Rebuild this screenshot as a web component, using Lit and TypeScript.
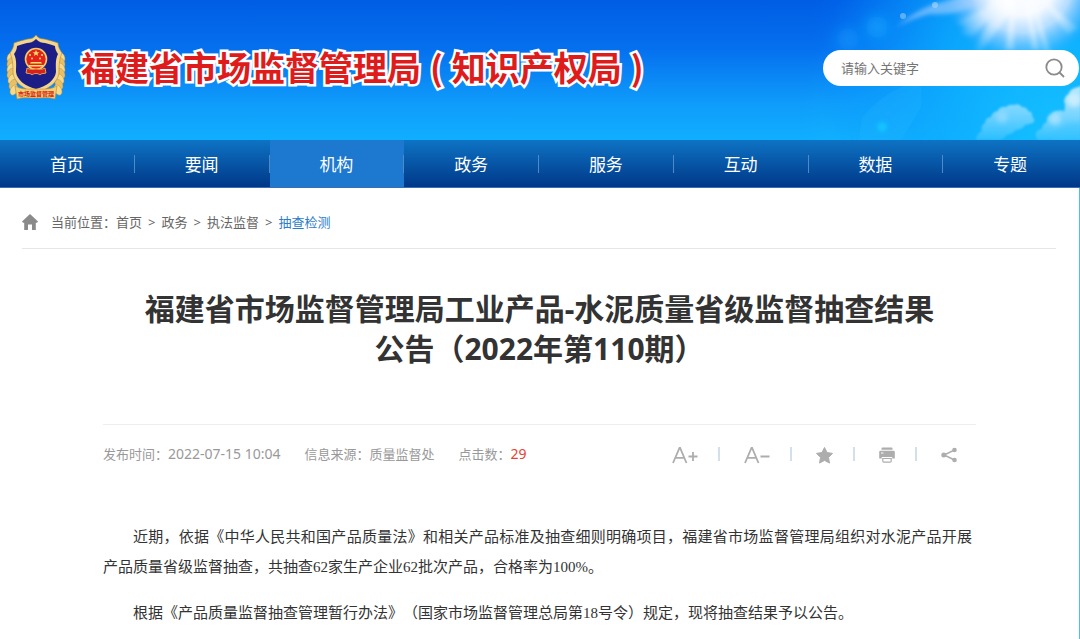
import { LitElement, html, css, svg } from "lit";
import { customElement } from "lit/decorators.js";

const NAV = ["首页", "要闻", "机构", "政务", "服务", "互动", "数据", "专题"];
const CRUMBS = ["首页", "政务", "执法监督", "抽查检测"];

const TOOLS = [
  { label: "放大字号", width: 26, art: svg`<path fill="none" stroke="currentColor" stroke-width="1.8" d="M1 19L7.500 4h.6L14.500 19M3.200 13.800h9.200M16.500 12.500h9M21 8v9"/>` },
  { label: "缩小字号", width: 26, art: svg`<path fill="none" stroke="currentColor" stroke-width="1.8" d="M1 19L7.500 4h.6L14.500 19M3.200 13.800h9.200M16.500 12.500h9"/>` },
  { label: "收藏", width: 17, art: svg`<path stroke="currentColor" stroke-linejoin="round" d="M8.500 3.500l2.500 5 5.500.9-4 4 1 5.700-5-2.700-5 2.700 1-5.700-4-4 5.500-.9z"/>` },
  { label: "打印", width: 16, art: svg`<path d="M3.500 3.500h9q1 0 1 1v1.200h-11V4.500q0-1 1-1zM1.500 6.700h13q1.300 0 1.300 1.300v6.500h-2.600V13H2.800v1.500H.2V8q0-1.300 1.300-1.300z"/><path fill="#fff" d="M2 8.500h2.500v1H2z"/><path fill="none" stroke="currentColor" stroke-width="1.200" d="M3.800 14.500h8.400V17q0 1.200-1 1.200H4.800q-1 0-1-1.200z"/>` },
  { label: "分享", width: 16, art: svg`<path fill="none" stroke="currentColor" stroke-width="1.400" d="M13.500 6L3 11l10.500 5"/><circle cx="13.500" cy="6" r="2.300"/><circle cx="2.800" cy="11" r="2.500"/><circle cx="13.500" cy="16" r="2.300"/>` },
];

@customElement("site-emblem")
export class SiteEmblem extends LitElement {
  static styles = css`
    :host { display: block; flex: none; }
    .emblem { display: block; width: 62px; height: 68px; }
    .motto { font: bold 6px "Noto Sans CJK SC", sans-serif; fill: #d8241a; }
  `;

  private leaves(side: number) {
    return [0, 1, 2, 3, 4, 5, 6].map((i) => {
      const x = 31 + side * (25 - (i > 3 ? (i - 3) * 1 : 0));
      const y = 23 + i * 5.5;
      return svg`<ellipse cx=${x} cy=${y} rx="3.500" ry="5.500" fill=${i % 2 ? "#e9c068" : "#f5d98c"}
        stroke="#b98a34" stroke-width=".4" transform="rotate(${side * -28} ${x} ${y})"/>`;
    });
  }

  render() {
    return html`<svg class="emblem" viewBox="0 0 62 68" role="img" aria-label="徽标">
      ${this.leaves(-1)}${this.leaves(1)}
      <path d="M31 1c2 3 5 4 8 4 4 1 9 2 14 4 0 4 2 7 4 10-3 6-3 14-3 20-1 9-10 16-23 20C18 55 9 48 8 39c0-6 0-14-3-20 2-3 4-6 4-10 5-2 10-3 14-4 3 0 6-1 8-4z" fill="#f3d68b" stroke="#b48732" stroke-width=".6"/>
      <path d="M31 5c3 3 6 4 9 4 4 1 7 2 10 3 0 3 1 5 3 8-3 6-2 12-2 18-1 8-9 14-20 17-11-3-19-9-20-17 0-6 1-12-2-18 2-3 3-5 3-8 3-1 6-2 10-3 3 0 6-1 9-4z" fill="#1d1d86"/>
      <circle cx="31" cy="25" r="10.500" fill="#e2231c" stroke="#f0cb69" stroke-width="1.600"/>
      <path d="M31 16l1 2.200h2.400l-2 1.500.8 2.300-2.200-1.400-2.200 1.400.8-2.300-2-1.500H30z" fill="#ffe16a"/>
      <g fill="#ffe16a"><circle cx="25" cy="21" r="1"/><circle cx="37" cy="21" r="1"/><circle cx="27" cy="24.500" r=".9"/><circle cx="35" cy="24.500" r=".9"/>
      <path d="M26 28h10l1 1.500H25zM24 31h14v1.500H24z"/></g>
      <path d="M22 34c3 2 6 1 9 1s6 1 9-1l1 5c-3 1-5 0-6 2-2-2-6-2-8 0-1-2-3-1-6-2z" fill="#d9201c" stroke="#efc45c" stroke-width=".8"/>
      <path d="M10 52c7 4 14 3 21 3s14 1 21-3l-2 13c-6-2-12-1-19-1s-13-1-19 1z" fill="#f4cf73" stroke="#b98a34" stroke-width=".6"/>
      <text class="motto" x="31" y="62" text-anchor="middle">市场监督管理</text>
    </svg>`;
  }
}

@customElement("sky-scene")
export class SkyScene extends LitElement {
  static styles = css`
    :host { display: block; overflow: hidden; }
    .sky { display: block; width: 100%; height: 100%; }
  `;

  render() {
    return html`<svg class="sky" viewBox="0 0 420 140" preserveAspectRatio="xMaxYMin slice" aria-hidden="true">
      <defs>
        <radialGradient id="sun" gradientUnits="userSpaceOnUse" cx="362" cy="-18" r="82">
          <stop offset="0" stop-color="#fff"/><stop offset=".4" stop-color="#f6faff"/>
          <stop offset=".62" stop-color="#cfe4ff" stop-opacity=".85"/>
          <stop offset=".82" stop-color="#8cc6ff" stop-opacity=".45"/>
          <stop offset="1" stop-color="#35a5ff" stop-opacity="0"/>
        </radialGradient>
        <radialGradient id="halo" gradientUnits="userSpaceOnUse" cx="380" cy="40" r="230">
          <stop offset="0" stop-color="#08a8ff"/><stop offset=".4" stop-color="#069cff" stop-opacity=".8"/>
          <stop offset="1" stop-color="#0478ff" stop-opacity="0"/>
        </radialGradient>
        <radialGradient id="ray" gradientUnits="userSpaceOnUse" cx="362" cy="-8" r="80">
          <stop offset=".2" stop-color="#fff" stop-opacity=".9"/><stop offset="1" stop-color="#d8ecff" stop-opacity="0"/>
        </radialGradient>
        <radialGradient id="deep" gradientUnits="userSpaceOnUse" cx="400" cy="140" r="260">
          <stop offset="0" stop-color="#18c8ff" stop-opacity=".8"/><stop offset="1" stop-color="#10c0ff" stop-opacity="0"/>
        </radialGradient>
        <linearGradient id="cloud" gradientUnits="userSpaceOnUse" x1="0" y1="88" x2="0" y2="142">
          <stop offset="0" stop-color="#d0f0ff"/><stop offset=".5" stop-color="#8edaff"/><stop offset="1" stop-color="#2cc0ff"/>
        </linearGradient>
        <filter id="soft" x="-50%" y="-50%" width="200%" height="200%"><feGaussianBlur stdDeviation="2"/></filter>
        <filter id="wide" x="-60%" y="-60%" width="220%" height="220%"><feGaussianBlur stdDeviation="6"/></filter>
        <filter id="fluff" x="-10%" y="-10%" width="120%" height="120%"><feGaussianBlur stdDeviation=".9"/></filter>
      </defs>
      <rect width="420" height="140" fill="url(#halo)"/>
      <rect width="420" height="140" fill="url(#deep)"/>
      <circle cx="362" cy="-18" r="82" fill="url(#sun)"/>
      <g fill="url(#ray)" filter="url(#soft)">
        <path d="M340-8L300 34l12 2 38-36zM345-8L313 52l8 0 34-46zM354-8L345 50l9 0zM365-8L372 50l8 0zM370-8L384 54l7-2zM375-8L408 34l10-6zM362-8L296 22l10 6z"/>
      </g>
      <path d="M236 27Q262 6 282 2L306-4 318 4Q296 16 270 14 252 18 236 27z" fill="#a8d0ff" opacity=".6" filter="url(#soft)"/>
      <g filter="url(#wide)">
        <circle cx="217" cy="27" r="11" fill="#0fa2ff" opacity=".7"/>
        <circle cx="188" cy="39" r="11" fill="#109cff" opacity=".5"/>
      </g>
      <circle cx="222" cy="127" r="5" fill="#10d0ff" opacity=".7" filter="url(#soft)"/>
      <circle cx="243" cy="16" r="3" fill="#6dbaff" opacity=".8"/>
      <circle cx="275" cy="5" r="3" fill="#b0d6ff" opacity=".6"/>
      <path d="M202 118q20-25 50-35l9 4 0 20-20 33h-42z" fill="#3cc4ff" opacity=".14"/>
      <g filter="url(#fluff)" fill="url(#cloud)">
        <g opacity=".75">
          <path d="M316 140q1-7 6-9-2-5 3-8 0-5 6-6 1-5 7-6 2-5 8-4 3-3 8-2 5-2 8 2 5 0 6 4 5 1 4 5 4 4 1 7-4 1-8 2-3 5-9 5-3 4-9 5-3 4-7 5z"/>
        </g>
        <g opacity=".85">
          <path d="M378 140q-3-3-2-6 0-4 6-5 0-5 5-7-1-5 4-8 4-4 8-3 3-2 5 1 2-6 0-11 1-5 5-7 1-5 6-6l6-2v54z"/>
        </g>
      </g>
      <g filter="url(#soft)">
        <circle cx="414" cy="100" r="7" fill="#e6f6ff" opacity=".6"/>
        <circle cx="395" cy="119" r="6" fill="#bfe9ff" opacity=".6"/>
        <circle cx="342" cy="117" r="6" fill="#a8e2ff" opacity=".5"/>
        <path d="M392 138q8-12 18-14 6-2 12 0v16h-30z" fill="#3cc4ff" opacity=".45"/>
      </g>
    </svg>`;
  }
}

@customElement("app-root")
export class AppRoot extends LitElement {
  static styles = css`
    :host {
      display: flex;
      flex-direction: column;
      height: 100vh;
      overflow: hidden;
      background: #fff;
      color: #666;
      font: 13px/20px "Noto Sans", "Noto Sans CJK SC", sans-serif;
    }
    a { color: inherit; text-decoration: none; }
    button { border: 0; padding: 0; background: none; color: inherit; font: inherit; cursor: pointer; }

    .banner {
      position: relative;
      display: flex;
      flex: none;
      align-items: center;
      height: 140px;
      box-sizing: border-box;
      padding: 0 1px 4px 5px;
      background: linear-gradient(#005de4, #0570ee 35%, #0f9dfb 75%, #10aeff);
    }
    .sky { position: absolute; top: 0; right: 0; bottom: 0; width: 420px; }
    .brand { position: relative; display: flex; align-items: center; gap: 14px; flex: 1; }
    .name {
      margin: 0;
      display: flex;
      gap: 9px;
      padding-bottom: 2px;
      font: bold 34px/48px "Noto Sans CJK SC", sans-serif;
      color: #df1c1c;
      -webkit-text-stroke: 5px #fff;
      paint-order: stroke fill;
      stroke-linejoin: round;
      white-space: nowrap;
    }
    .search {
      position: relative;
      display: flex;
      align-items: center;
      width: 256px;
      height: 36px;
      box-sizing: border-box;
      padding: 0 14px 0 18px;
      border-radius: 18px;
      background: #fff;
    }
    .query {
      flex: 1;
      min-width: 0;
      border: 0;
      padding: 0;
      outline: 0;
      background: none;
      font: 13px/20px "Noto Sans CJK SC", sans-serif;
      color: #555;
    }
    .query::placeholder { color: #757575; opacity: 1; }
    .go { display: flex; }
    .lens { width: 20px; height: 20px; fill: none; stroke: #8a8a8a; stroke-width: 1.8; }

    .nav {
      display: grid;
      flex: none;
      grid-template-columns: repeat(8, 1fr);
      height: 48px;
      box-sizing: border-box;
      padding-right: 2px;
      border-bottom: 1px solid #3c6db4;
      background: linear-gradient(#0e73c4, #003888);
    }
    .tab {
      display: flex;
      align-items: center;
      color: #fff;
      font: 17px/24px "Noto Sans CJK SC", sans-serif;
    }
    .tab::after { content: ""; width: 1px; height: 18px; background: #4c8bc8; }
    .tab:last-child::after { background: none; }
    .tab.active { background: #1d78d0; }
    .label { flex: 1; text-align: center; }

    .page { flex: 1; border-right: 1px solid #4cc0ec; }
    .crumbs {
      display: flex;
      align-items: center;
      gap: 13px;
      margin: 0 23px 0 22px;
      padding: 24px 0 16px;
      border-bottom: 1px solid #e6e6e6;
    }
    .home { width: 16px; height: 16px; fill: #8a8a8a; }
    .trail { display: flex; gap: 6px; }
    .here { color: #2b7cc9; }

    .article { padding: 0 103px; }
    .title {
      margin: 0;
      padding: 40px 0 55px;
      font: bold 30px/40px "Noto Sans", "Noto Sans CJK SC", sans-serif;
      color: #333;
      text-align: center;
    }
    .line { display: block; }
    .meta {
      display: flex;
      align-items: center;
      justify-content: space-between;
      padding: 19px 19px 18px 0;
      border-top: 1px solid #eee;
      color: #999;
    }
    .facts { display: flex; gap: 24px; }
    .figure { font-size: 14px; }
    .hits { color: #e8412f; font-size: 14px; }
    .tools { display: flex; align-items: center; color: #adadad; }
    .tool { display: flex; }
    .tool + .tool::before {
      content: "";
      align-self: center;
      width: 2px;
      height: 14px;
      margin: 0 24px 0 20px;
      background: #d3e0ea;
    }
    .glyph { height: 20px; fill: currentColor; }

    .body { padding: 40px 4px 0 0; color: #333; }
    .para {
      margin: 0 0 16px;
      font: 15px/30px "Liberation Serif", "Noto Sans CJK SC", serif;
      text-indent: 2em;
      text-align: justify;
      text-spacing-trim: space-all;
    }
  `;

  render() {
    return html`
      <header class="banner">
        <sky-scene class="sky"></sky-scene>
        <div class="brand">
          <site-emblem></site-emblem>
          <h1 class="name"><span>福建省市场监督管理局</span><span>(</span><span>知识产权局</span><span>)</span></h1>
        </div>
        <form class="search" role="search">
          <input class="query" type="text" aria-label="搜索" placeholder="请输入关键字" />
          <button class="go" type="button" aria-label="搜索">
            <svg class="lens" viewBox="0 0 20 20"><circle cx="9" cy="9" r="7.700"/><path d="M14.500 14.500l4.500 4.500"/></svg>
          </button>
        </form>
      </header>
      <nav class="nav">
        ${NAV.map((t, i) => html`<a class="tab ${i === 2 ? "active" : ""}" href="#"><span class="label">${t}</span></a>`)}
      </nav>
      <div class="page">
        <div class="crumbs">
          <svg class="home" viewBox="0 0 16 16" aria-hidden="true"><path d="M8 0l8 7.500-1 1.200h-1.200V16H10v-5.500H6V16H2.200V8.700H1L0 7.500z"/></svg>
          <div class="trail"><span>当前位置：<a href="#">${CRUMBS[0]}</a></span>
            ${CRUMBS.slice(1).map((t, i) => html`<span>&gt;</span><a class=${i === 2 ? "here" : ""} href="#">${t}</a>`)}
          </div>
        </div>
        <main class="article">
          <h2 class="title"><span class="line">福建省市场监督管理局工业产品-水泥质量省级监督抽查结果</span><span class="line">公告（2022年第110期）</span></h2>
          <div class="meta">
            <div class="facts">
              <span>发布时间：<time class="figure">2022-07-15 10:04</time></span>
              <span>信息来源：质量监督处</span>
              <span>点击数：<span class="hits">29</span></span>
            </div>
            <div class="tools">
              ${TOOLS.map((t) => html`<button class="tool" type="button" aria-label=${t.label}><svg class="glyph" width=${t.width} viewBox="0 0 ${t.width} 20">${t.art}</svg></button>`)}
            </div>
          </div>
          <div class="body">
            <p class="para">近期，依据《中华人民共和国产品质量法》和相关产品标准及抽查细则明确项目，福建省市场监督管理局组织对水泥产品开展产品质量省级监督抽查，共抽查62家生产企业62批次产品，合格率为100%。</p>
            <p class="para">根据《产品质量监督抽查管理暂行办法》（国家市场监督管理总局第18号令）规定，现将抽查结果予以公告。</p>
          </div>
        </main>
      </div>
    `;
  }
}
